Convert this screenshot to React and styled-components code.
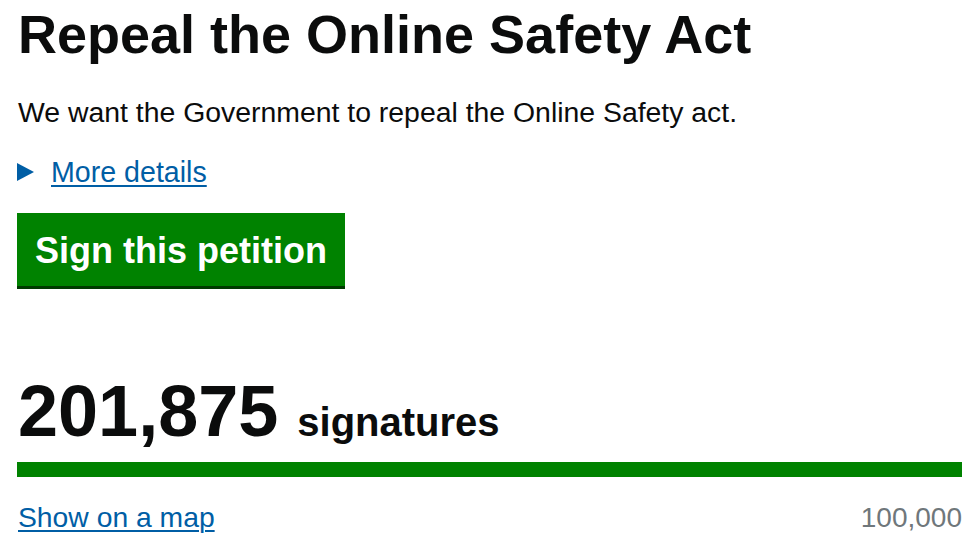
import React from 'react';
import styled, { createGlobalStyle } from 'styled-components';

const GlobalStyle = createGlobalStyle`
    body{
        margin:0;
        background:#fff;
        font-family:"Liberation Sans", Arial, sans-serif;
        color:#0b0c0c;
    }
`

const petition = {
    title: 'Repeal the Online Safety Act',
    summary: 'We want the Government to repeal the Online Safety act.',
    signatures: 201875,
    threshold: 100000,
}

const App = () => {
    const pct = Math.min(100, (petition.signatures / petition.threshold) * 100);

    return (
        <Page>
            <GlobalStyle />
            <Title>{petition.title}</Title>
            <Summary>{petition.summary}</Summary>
            <Details>
                <Arrow width="17" height="18" viewBox="0 0 17 18">
                    <polygon points="0,0 17,9 0,18" fill="#005ea5" />
                </Arrow>
                <Link href="#">More details</Link>
            </Details>
            <SignButton>Sign this petition</SignButton>
            <Count>
                <Number>{petition.signatures.toLocaleString('en-GB')}</Number>
                <Label>signatures</Label>
            </Count>
            <Bar>
                <Fill style={{ width: pct + '%' }} />
            </Bar>
            <Footer>
                <Link href="#" $size="28.3px">Show on a map</Link>
                <Target>{petition.threshold.toLocaleString('en-GB')}</Target>
            </Footer>
        </Page>
    )
}

export default App

const Page = styled.div`
    padding: 4px 17px 0 17px;
    display:flex;
    flex-direction:column;
    align-items:flex-start;
`

const Title = styled.h1`
    margin:0;
    font-size:54px;
    line-height:60px;
    font-weight:bold;
    margin-left:1px;
`

const Summary = styled.p`
    margin:30px 0 0 1px;
    font-size:28.4px;
    line-height:36px;
`

const Details = styled.div`
    margin-top:24px;
    display:flex;
    align-items:center;
    gap:17px;
    font-size:28px;
    line-height:36px;
`

const Arrow = styled.svg`
    display:block;
`

const Link = styled.a`
    color:#005ea5;
    font-size:${p => p.$size || '28.6px'};
    line-height:36px;
    text-decoration:underline;
    text-decoration-thickness:2px;
    text-underline-offset:3px;
`

const SignButton = styled.button`
    margin-top:23px;
    padding:18px 18px 15px;
    background:#008200;
    color:#fff;
    border:none;
    border-bottom:3px solid #003a00;
    border-radius:0;
    font-family:"Liberation Sans", Arial, sans-serif;
    font-size:36px;
    line-height:40px;
    font-weight:bold;
    cursor:pointer;
`

const Count = styled.div`
    margin-top:82px;
    display:flex;
    align-items:baseline;
    gap:19px;
    margin-left:1px;
`

const Number = styled.span`
    font-size:72px;
    line-height:80px;
    font-weight:bold;
`

const Label = styled.span`
    font-size:40px;
    font-weight:bold;
`

const Bar = styled.div`
    margin-top:11px;
    align-self:stretch;
    height:15px;
    background:#dee0e2;
`

const Fill = styled.div`
    height:100%;
    background:#008200;
`

const Footer = styled.div`
    margin-top:22px;
    align-self:stretch;
    display:flex;
    justify-content:space-between;
    align-items:baseline;
    padding-left:1px;
`

const Target = styled.span`
    font-size:28px;
    line-height:36px;
    color:#6f777b;
`
